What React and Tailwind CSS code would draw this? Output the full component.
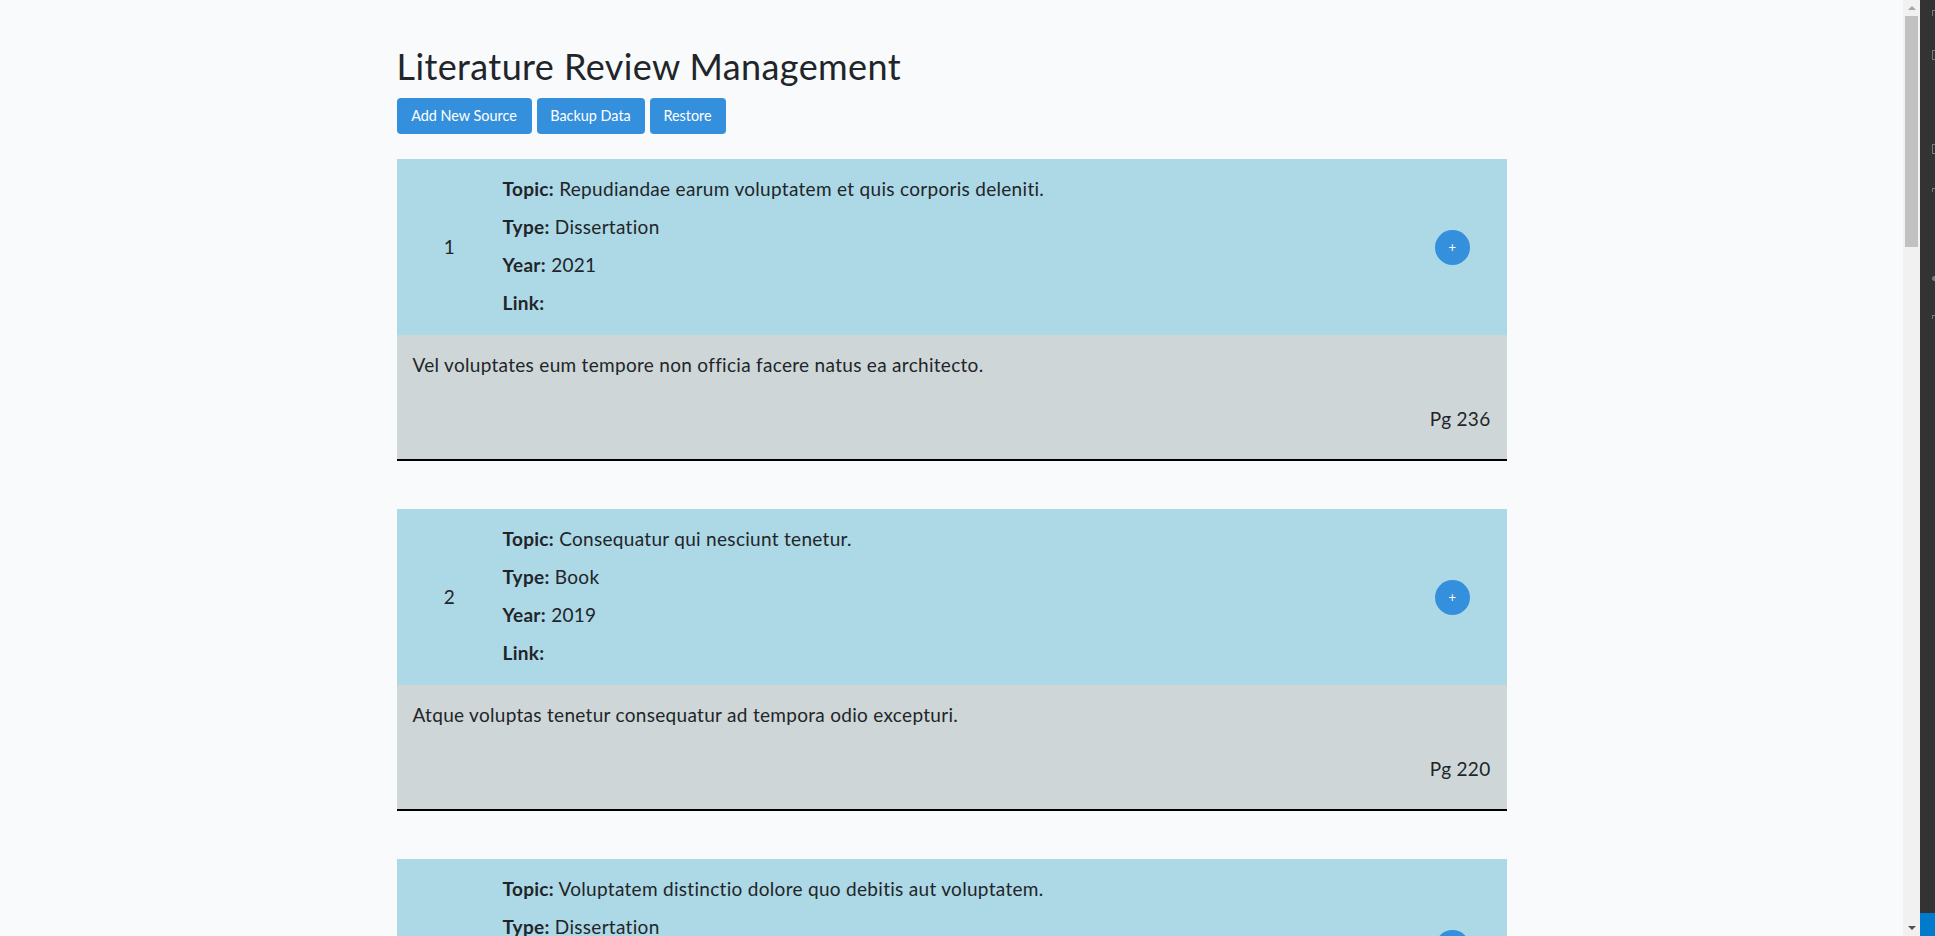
import React from 'react';

const sources = [
  {
    id: 1,
    topic: 'Repudiandae earum voluptatem et quis corporis deleniti.',
    type: 'Dissertation',
    year: '2021',
    note: 'Vel voluptates eum tempore non officia facere natus ea architecto.',
    page: 236,
  },
  {
    id: 2,
    topic: 'Consequatur qui nesciunt tenetur.',
    type: 'Book',
    year: '2019',
    note: 'Atque voluptas tenetur consequatur ad tempora odio excepturi.',
    page: 220,
  },
  {
    id: 3,
    topic: 'Voluptatem distinctio dolore quo debitis aut voluptatem.',
    type: 'Dissertation',
    year: '2017',
    note: 'Quia rerum dolorem ut laborum incidunt eos.',
    page: 114,
  },
];

const Field = ({ label, value }) => (
  <div className="h-[27px] leading-[27px]">
    <span className="font-bold">{label}:</span> {value}
  </div>
);

const SourceCard = ({ source }) => (
  <div className="mb-[48px] border-b-2 border-black">
    <div className="flex items-center bg-[#add8e6] h-[176px]">
      <div className="w-[106px] text-center">{source.id}</div>
      <div className="flex-1 flex flex-col gap-[11px] -mt-[3px]">
        <Field label="Topic" value={source.topic} />
        <Field label="Type" value={source.type} />
        <Field label="Year" value={source.year} />
        <Field label="Link" value="" />
      </div>
      <div className="w-[108px] flex justify-center">
        <button className="w-[35px] h-[35px] rounded-full bg-[#3490dc] text-white text-[13px] leading-none flex items-center justify-center">
          +
        </button>
      </div>
    </div>
    <div className="bg-[#cfd6d8] px-4 pt-4 pb-[27px]">
      <p className="h-[27px] leading-[27px]">{source.note}</p>
      <p className="h-[27px] leading-[27px] mt-[27px] text-right">Pg {source.page}</p>
    </div>
  </div>
);

const Scrollbar = () => (
  <div className="w-[17px] h-full bg-[#f1f1f1] flex flex-col items-center">
    <div className="h-[16px] flex items-center justify-center">
      <div className="w-0 h-0 border-l-4 border-r-4 border-b-4 border-l-transparent border-r-transparent border-b-[#a3a3a3]" />
    </div>
    <div className="w-[13px] h-[231px] bg-[#c1c1c1]" />
    <div className="flex-1" />
    <div className="h-[16px] flex items-center justify-center">
      <div className="w-0 h-0 border-l-4 border-r-4 border-t-4 border-l-transparent border-r-transparent border-t-[#505050]" />
    </div>
  </div>
);

const SideStrip = () => (
  <div className="w-[15px] h-full bg-[#333333] flex flex-col">
    <div className="flex-1 flex flex-col items-start pl-[12px] pt-[10px] gap-[34px]">
      <div className="w-[3px] h-[6px] border-l border-t border-[#7a7a8a]" />
      <div className="w-[3px] h-[10px] border-l border-t border-b border-[#7a7a8a]" />
      <div className="w-[3px] h-[10px] border-l border-t border-b border-[#7a7a8a] mt-[50px]" />
      <div className="w-[3px] h-[4px] border-l border-t border-[#7a7a8a]" />
      <div className="w-[3px] h-[5px] rounded-l-full bg-[#7a7a8a] mt-[50px]" />
      <div className="w-[3px] h-[4px] border-l border-t border-[#7a7a8a]" />
    </div>
    <div className="h-[23px] bg-[#007acc]" />
  </div>
);

export default function App() {
  return (
    <div
      className="w-[1935px] h-[936px] flex overflow-hidden text-[19px] tracking-[0.3px] text-[#212529]"
      style={{ fontFamily: 'Lato, "Open Sans", sans-serif' }}
    >
      <main className="w-[1903px] h-full bg-[#f8fafc] overflow-hidden">
        <div className="w-[1110px] mx-auto pt-[44px]">
          <h1 className="text-[36px] leading-[44px] font-normal tracking-[0.4px]">Literature Review Management</h1>
          <div className="flex gap-[5px] mt-[10px] tracking-normal">
            <button className="h-[36px] rounded bg-[#3490dc] text-white text-[14.4px] w-[135px]">
              Add New Source
            </button>
            <button className="h-[36px] rounded bg-[#3490dc] text-white text-[14.4px] w-[108px]">
              Backup Data
            </button>
            <button className="h-[36px] rounded bg-[#3490dc] text-white text-[14.4px] w-[76px]">
              Restore
            </button>
          </div>
          <div className="mt-[25px]">
            {sources.map((s) => (
              <SourceCard key={s.id} source={s} />
            ))}
          </div>
        </div>
      </main>
      <Scrollbar />
      <SideStrip />
    </div>
  );
}
